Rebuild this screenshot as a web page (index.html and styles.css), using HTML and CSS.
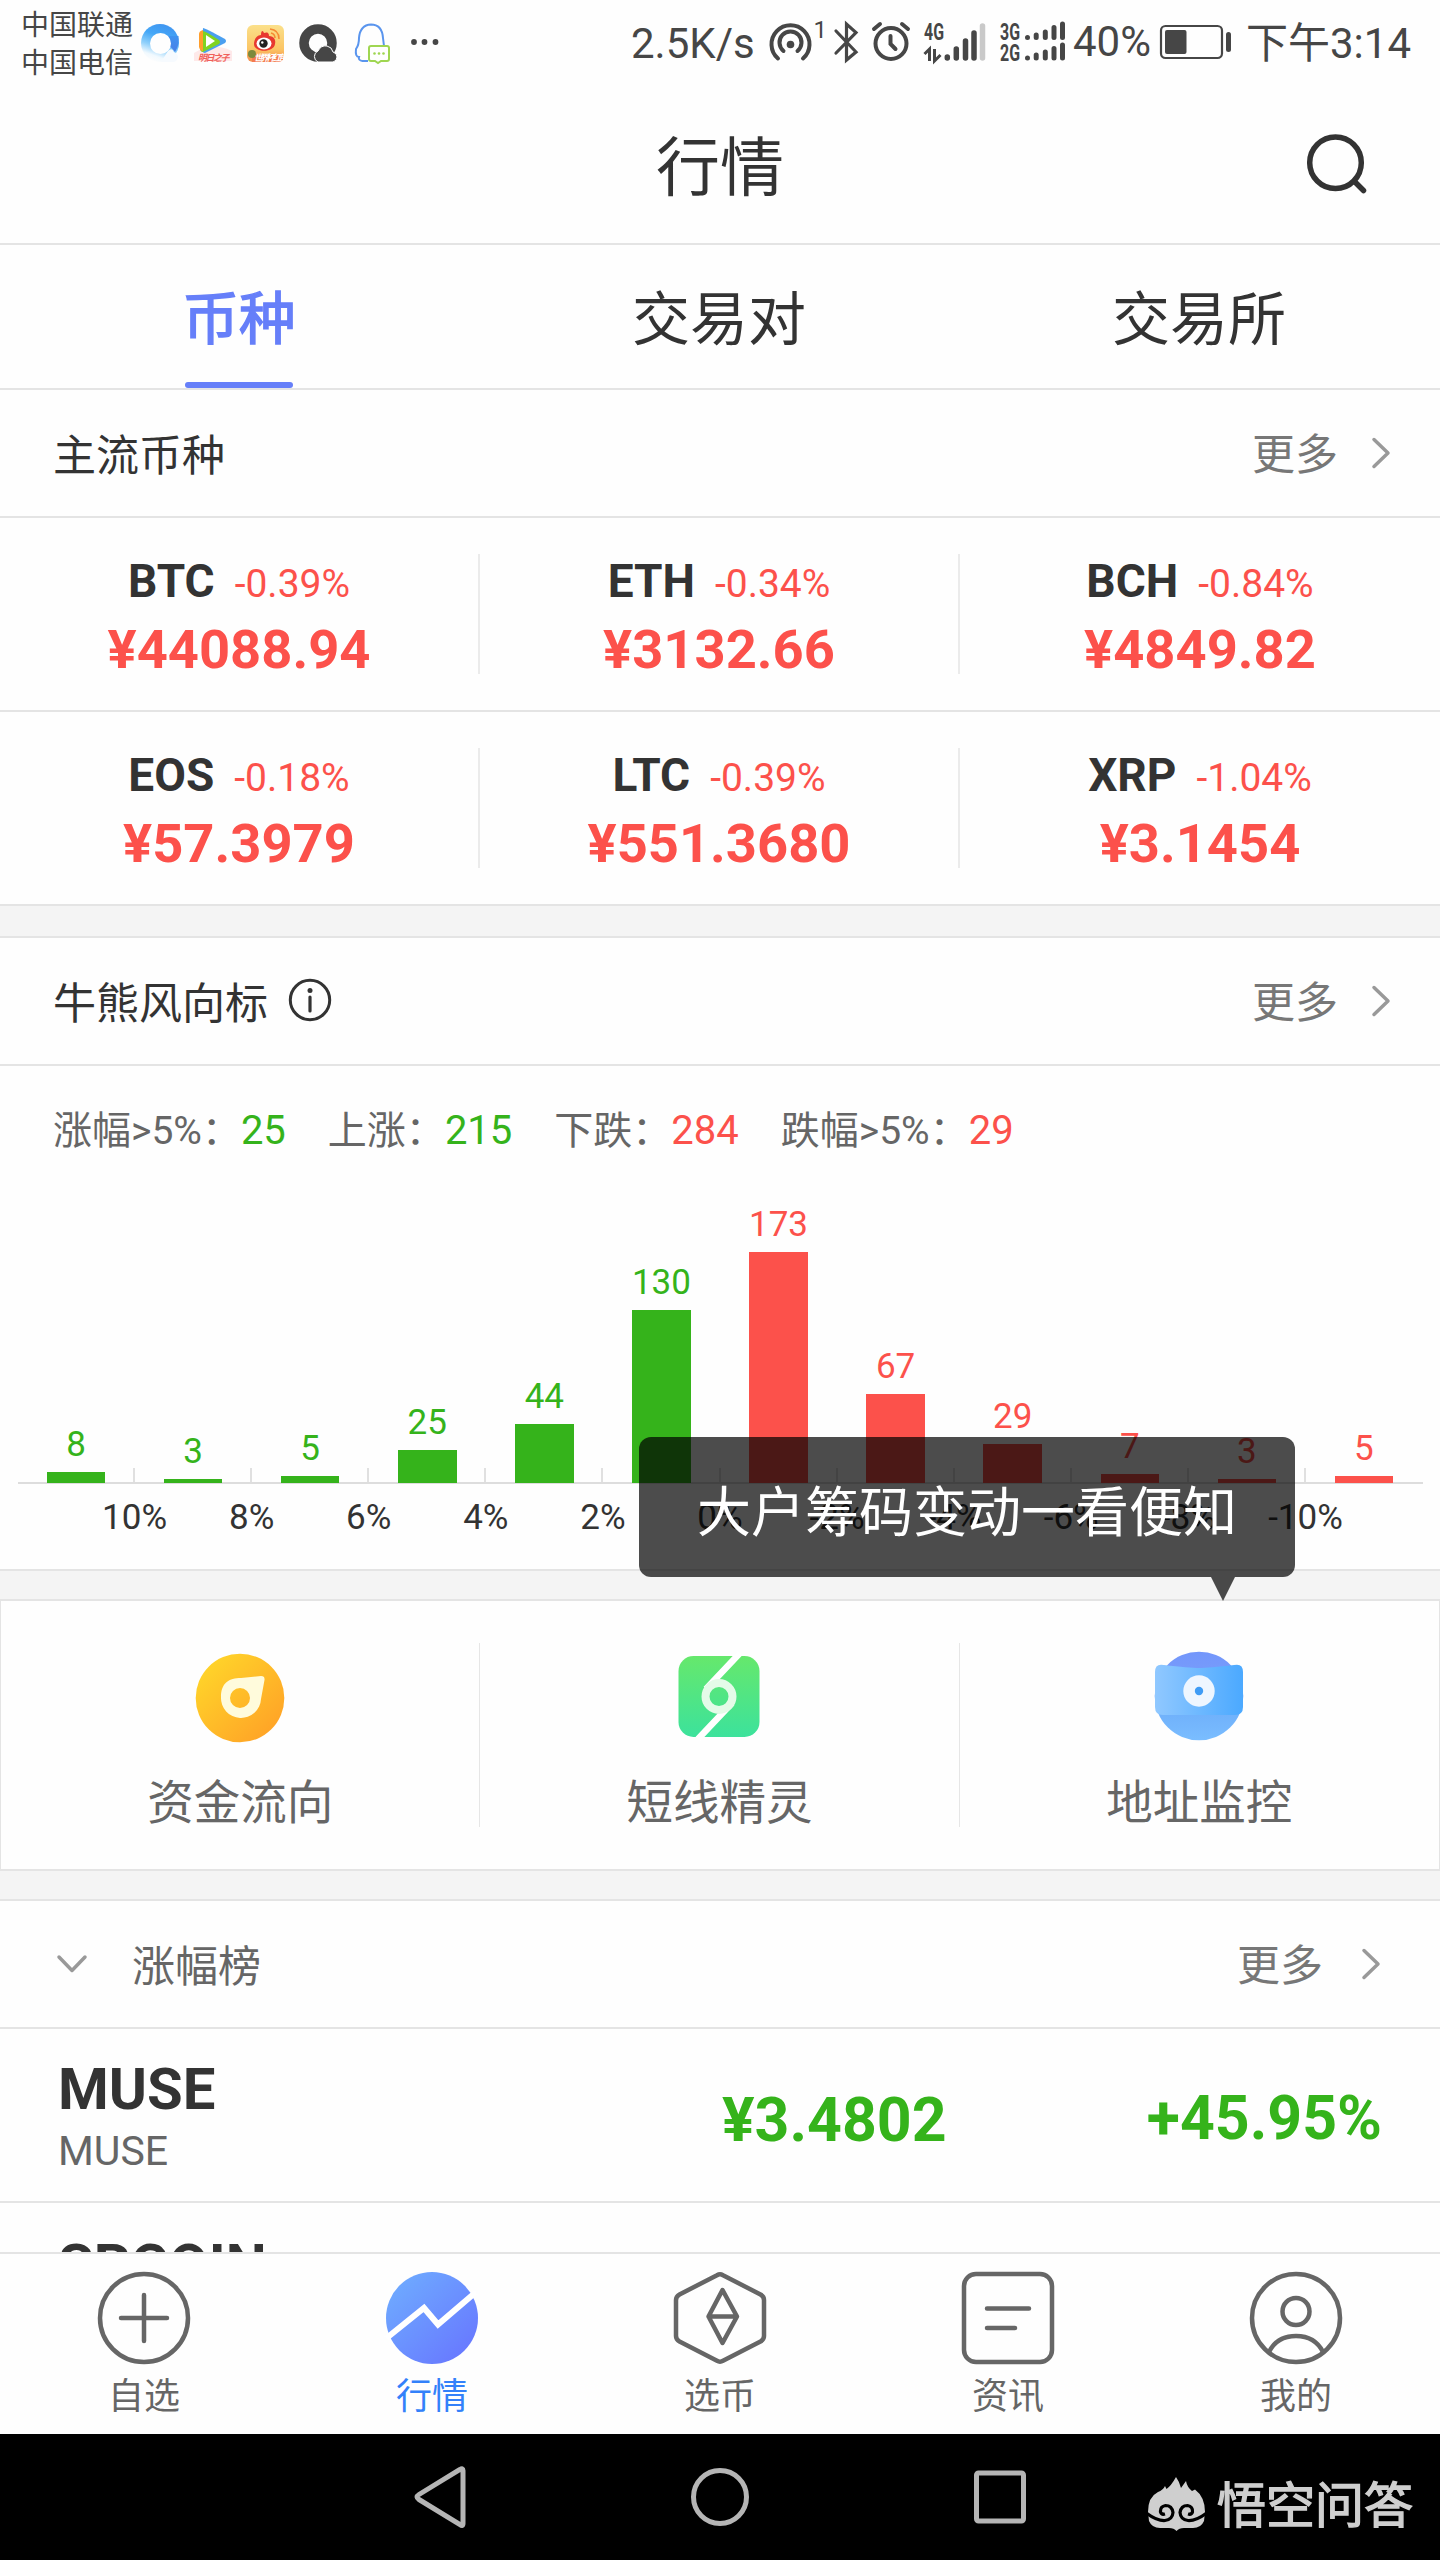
FILE: index.html
```html
<!DOCTYPE html>
<html lang="zh-CN">
<head>
<meta charset="utf-8">
<title>行情</title>
<link rel="stylesheet" href="styles.css">
</head>
<body>
<div class="phone">
  <div class="status">
    <div class="carriers"><span>中国联通</span><span>中国电信</span></div>
    <svg class="notif" width="316" height="50" viewBox="134 18 316 50">
      <defs>
        <linearGradient id="qb" x1=".7" y1="0" x2=".35" y2="1"><stop offset="0" stop-color="#3f93f0"/><stop offset=".35" stop-color="#45a8f7"/><stop offset=".62" stop-color="#8fd0fb"/><stop offset=".85" stop-color="#f1f9fe"/><stop offset="1" stop-color="#fdfdfd"/></linearGradient>
        <linearGradient id="qt" x1="0" y1="0" x2="0" y2="1"><stop offset="0" stop-color="#3f93f0"/><stop offset="1" stop-color="#4b7fe6"/></linearGradient>
        <linearGradient id="wb" x1="0" y1="0" x2="0" y2="1"><stop offset="0" stop-color="#fbe08a"/><stop offset=".65" stop-color="#fbc565"/><stop offset="1" stop-color="#f58a4b"/></linearGradient>
      </defs>
      <circle cx="160" cy="43" r="19" fill="url(#qb)"/>
      <path d="M168 36h10.500q1 9-3.500 16q-4-6-7-5z" fill="url(#qt)"/>
      <circle cx="160.500" cy="43.500" r="10.500" fill="#fefefe"/>
      <path d="M168 51q4-4 6 1q4 2 4 5q-1 5-5 5h-12z" fill="#f6fafe"/>
      <path d="M194 53q18-12 38-2v10h-38z" fill="#fee9e9"/>
      <path d="M203 28q2 0 22 11q2 2 0 4L205 53q-3 0-3-4z" fill="#4a9ff0"/>
      <path d="M202 31q2-1 17 9q2 2 0 4L203 52q-3 0-3-4z" fill="#7fd321"/>
      <path d="M203 30q-4 1-4 4v13q1 4 4 4z" fill="#ff9e2c"/>
      <path d="M206 35l9 6l-9 6z" fill="#fff"/>
      <text x="198" y="61" class="micro red-ink">明日之子</text>
      <rect x="247" y="25" width="37" height="37" rx="6" fill="url(#wb)"/>
      <path d="M254 44c0-6 4-9 7-9c0-5 2-5 3-2c5-2 5 2 5 3c5 0 7 4 6 8c-1 9-21 9-21 0z" fill="#e8382f"/>
      <ellipse cx="264" cy="43.500" rx="7.500" ry="6" fill="#fff"/><circle cx="263.500" cy="43.500" r="4.200" fill="#222"/>
      <circle cx="262.300" cy="42.500" r="1.200" fill="#fff"/>
      <path d="M270 29q9 1 9 10M271 33q4 1 4 5" stroke="#f58a33" stroke-width="1.500" fill="none"/>
      <path d="M252 55h31v4q-1 3-4 3h-27z" fill="#f47b50"/>
      <circle cx="252" cy="54" r="4" fill="#7c8a3d"/>
      <text x="254" y="61" class="micro white-ink">世界杯红包</text>
      <circle cx="318" cy="43" r="14" fill="none" stroke="#464646" stroke-width="9.500"/>
      <path d="M318 62a6 6 0 0 1 0-11q3-6 9-5q5 1 6 6q4 1 4 5t-4 5z" fill="#464646" stroke="#fff" stroke-width="1"/>
      <path d="M362 61q-4-1-3-4q-4 0-3-8q3-4 3-11q1-13 12-13.500q11 0 12 13.500l1 8M362 61h6" fill="none" stroke="#5a95ee" stroke-width="2"/>
      <path d="M371 46h16q2 0 2 2v11q0 2-2 2h-6l-3 2l-3-2h-4q-2 0-2-2V48q0-2 2-2z" fill="#fff" stroke="#9fd651" stroke-width="2"/>
      <g fill="#9fd651"><circle cx="374.500" cy="53.500" r="1.300"/><circle cx="379" cy="53.500" r="1.300"/><circle cx="383.500" cy="53.500" r="1.300"/></g>
      <g fill="#464646"><circle cx="414" cy="42" r="2.900"/><circle cx="424.500" cy="42" r="2.900"/><circle cx="435.500" cy="42" r="2.900"/></g>
    </svg>
    <span class="speed">2.5K/s</span>
    <svg class="sys" width="308" height="56" viewBox="764 12 308 56">
      <g fill="none" stroke="#464646" stroke-width="4" stroke-linecap="round">
        <path d="M779 58.500A19 19 0 1 1 804 58.500"/>
        <path d="M784.500 51A11 11 0 1 1 798.500 51"/>
        <path d="M837 31L857 52L847.500 60V24L857 32.500L837 53" stroke-width="3.200"/>
        <circle cx="892" cy="43.500" r="15.500"/>
        <path d="M891.500 36v8l5 5M875 29l6-5M909 29l-6-5"/>
      </g>
      <circle cx="791.500" cy="44.500" r="3.800" fill="#464646"/>
      <text x="814.500" y="38" class="sup">1</text>
      <text x="925" y="40" class="net" textLength="20" lengthAdjust="spacingAndGlyphs">4G</text>
      <text x="1001" y="40" class="net" textLength="20" lengthAdjust="spacingAndGlyphs">3G</text>
      <text x="1001" y="61" class="net" textLength="20" lengthAdjust="spacingAndGlyphs">2G</text>
      <path d="M925.500 54l5-5v12M935.500 49v12l6-6" stroke="#464646" stroke-width="3" fill="none"/>
      <g stroke="#464646" stroke-width="5.500" stroke-linecap="round">
        <path d="M948.300 57v1M957.300 49v9M966.500 41v17M975 33v25"/>
        <path d="M983.500 26v32" stroke="#c9c9c9"/>
      </g>
      <g stroke="#464646" stroke-width="5" stroke-linecap="round">
        <path d="M1028.500 37.500v.1M1037.200 35v2.500M1046.300 32v5.500M1055 27.500v10M1063.500 24v13.500"/>
        <path d="M1028.500 58v.1M1037.200 55v3M1046.300 52v6M1055 48.500v9.500M1063.500 45v13"/>
      </g>
    </svg>
    <span class="battery-pct">40%</span>
    <svg class="battery" width="74" height="36" viewBox="1162 24 74 36">
      <rect x="1164" y="26" width="61" height="32" rx="4.500" fill="none" stroke="#464646" stroke-width="2.200"/>
      <rect x="1168" y="30" width="21.500" height="24" rx="2" fill="#464646"/>
      <rect x="1229" y="32" width="5" height="20" rx="2.500" fill="#464646"/>
    </svg>
    <span class="clock">下午3:14</span>
  </div>

  <header class="title-bar">
    <h1>行情</h1>
    <svg class="search" width="68" height="68" viewBox="1302 128 68 68"><g fill="none" stroke="#333" stroke-width="5.500" stroke-linecap="round"><circle cx="1335.500" cy="161.700" r="25.800"/><path d="M1354.500 180.500L1363.500 189.500"/></g></svg>
  </header>

  <nav class="tabs">
    <a class="tab active">币种</a>
    <a class="tab">交易对</a>
    <a class="tab">交易所</a>
  </nav>

  <div class="section-head">
    <h2>主流币种</h2>
    <span class="more">更多<svg width="22" height="36" viewBox="0 0 22 36"><path d="M4 4.500L18 18L4 31.500"/></svg></span>
  </div>
  <div class="coins">
    <div class="coin"><p><b>BTC</b><span>-0.39%</span></p><strong>¥44088.94</strong></div>
    <div class="coin"><p><b>ETH</b><span>-0.34%</span></p><strong>¥3132.66</strong></div>
    <div class="coin"><p><b>BCH</b><span>-0.84%</span></p><strong>¥4849.82</strong></div>
  </div>
  <div class="coins">
    <div class="coin"><p><b>EOS</b><span>-0.18%</span></p><strong>¥57.3979</strong></div>
    <div class="coin"><p><b>LTC</b><span>-0.39%</span></p><strong>¥551.3680</strong></div>
    <div class="coin"><p><b>XRP</b><span>-1.04%</span></p><strong>¥3.1454</strong></div>
  </div>
  <div class="gap gap-coins"></div>

  <div class="section-head">
    <h2>牛熊风向标</h2>
    <svg class="info" width="46" height="46" viewBox="0 0 46 46"><circle cx="23" cy="23" r="19.700" fill="none" stroke="#333" stroke-width="3"/><circle cx="23" cy="13.500" r="2.500" fill="#333"/><path d="M23 20v14" stroke="#333" stroke-width="3.200" stroke-linecap="round"/></svg>
    <span class="more">更多<svg width="22" height="36" viewBox="0 0 22 36"><path d="M4 4.500L18 18L4 31.500"/></svg></span>
  </div>
  <div class="stats">
    <span>涨幅&gt;5%：<em class="up">25</em></span>
    <span>上涨：<em class="up">215</em></span>
    <span>下跌：<em class="down">284</em></span>
    <span>跌幅&gt;5%：<em class="down">29</em></span>
  </div>
  <div class="chart">
    <div class="bars">
      <div class="col up"><span>8</span><i style="height:11px"></i></div>
      <div class="col up"><span>3</span><i style="height:4px"></i></div>
      <div class="col up"><span>5</span><i style="height:7px"></i></div>
      <div class="col up"><span>25</span><i style="height:33px"></i></div>
      <div class="col up"><span>44</span><i style="height:59px"></i></div>
      <div class="col up"><span>130</span><i style="height:173px"></i></div>
      <div class="col down"><span>173</span><i style="height:231px"></i></div>
      <div class="col down"><span>67</span><i style="height:89px"></i></div>
      <div class="col down"><span>29</span><i style="height:39px"></i></div>
      <div class="col down"><span>7</span><i style="height:9px"></i></div>
      <div class="col down"><span>3</span><i style="height:4px"></i></div>
      <div class="col down"><span>5</span><i style="height:7px"></i></div>
    </div>
    <div class="scale"><span>10%</span><span>8%</span><span>6%</span><span>4%</span><span>2%</span><span>0%</span><span>-2%</span><span>-4%</span><span>-6%</span><span>-8%</span><span>-10%</span></div>
    <div class="tooltip">大户筹码变动一看便知</div>
  </div>
  <div class="gap gap-chart"></div>

  <div class="actions">
    <div class="action">
      <svg width="100" height="100" viewBox="0 0 100 100">
        <defs><linearGradient id="gold" x1="0" y1="0" x2="1" y2="1"><stop offset=".1" stop-color="#ffd52a"/><stop offset="1" stop-color="#ff9c26"/></linearGradient></defs>
        <circle cx="50" cy="50" r="44.300" fill="url(#gold)"/>
        <path fill-rule="evenodd" d="M31 49C31 35 39 30 51 30L71 28Q75 28 74.500 32L71 51A20 20 0 0 1 31 49zM50 40A10 10 0 1 0 50 60A10 10 0 1 0 50 40z" fill="#fffbdc"/>
      </svg>
      <span>资金流向</span>
    </div>
    <div class="action">
      <svg width="100" height="100" viewBox="0 0 100 100">
        <defs><linearGradient id="green" x1="0" y1="0" x2="0" y2="1"><stop offset="0" stop-color="#66e86c"/><stop offset="1" stop-color="#3ce29c"/></linearGradient></defs>
        <rect x="9.500" y="8" width="81" height="81" rx="15" fill="url(#green)"/>
        <path d="M71 5L37 41M63 55L29 91" stroke="#fff" stroke-width="6.500" fill="none"/>
        <circle cx="50" cy="48.500" r="13.500" fill="none" stroke="#e4fbe8" stroke-width="8"/>
      </svg>
      <span>短线精灵</span>
    </div>
    <div class="action">
      <svg width="100" height="100" viewBox="0 0 100 100">
        <defs>
          <linearGradient id="blue" x1="0" y1="0" x2="1" y2="0"><stop offset="0" stop-color="#90c8ff"/><stop offset="1" stop-color="#4ba9ff"/></linearGradient>
          <linearGradient id="ball" x1="0" y1="0" x2="0" y2="1"><stop offset="0" stop-color="#7396fb"/><stop offset=".3" stop-color="#789dfb"/><stop offset=".7" stop-color="#70b1fb"/><stop offset="1" stop-color="#7abdff"/></linearGradient>
        </defs>
        <circle cx="50" cy="48" r="44.300" fill="url(#ball)"/>
        <path d="M15 17Q40 20 50 20T85 17Q94 15 94 24V59Q94 67 86 67H14Q6 67 6 59V24Q6 15 15 17z" fill="url(#blue)"/>
        <circle cx="50" cy="43" r="15.700" fill="#eef6ff"/><circle cx="50" cy="43" r="4.200" fill="#3f9cf5"/>
      </svg>
      <span>地址监控</span>
    </div>
  </div>
  <div class="gap gap-actions"></div>

  <div class="section-head rank-head">
    <svg class="fold" width="36" height="24" viewBox="0 0 36 24"><path d="M5 5L18 18.500L31 5"/></svg>
    <h2>涨幅榜</h2>
    <span class="more">更多<svg width="22" height="36" viewBox="0 0 22 36"><path d="M4 4.500L18 18L4 31.500"/></svg></span>
  </div>
  <div class="rank">
    <div class="name"><b>MUSE</b><span>MUSE</span></div>
    <strong class="price">¥3.4802</strong>
    <strong class="pct">+45.95%</strong>
  </div>
  <div class="rank clipped"><div class="name"><b>SRCOIN</b></div></div>

  <nav class="tabbar">
    <a><svg width="96" height="96" viewBox="0 0 96 96"><circle cx="48" cy="48" r="44"/><path d="M48 25v46M25 48h46"/></svg><span>自选</span></a>
    <a class="on"><svg width="96" height="96" viewBox="0 0 96 96"><defs><linearGradient id="act" x1="0" y1="0" x2="1" y2="1"><stop offset="0" stop-color="#6fb0ff"/><stop offset="1" stop-color="#6772ff"/></linearGradient></defs><circle cx="48" cy="48" r="46" class="disc" fill="url(#act)"/><path class="trend" d="M2 68.500L40 38L54 54.500L92 22"/></svg><span>行情</span></a>
    <a><svg width="96" height="96" viewBox="0 0 96 96"><path d="M45 5.200Q48 3.500 51 5.200L88.500 24.500Q92 26.500 92 30V66Q92 69.500 88.500 71.500L51 90.800Q48 92.500 45 90.800L7.500 71.500Q4 69.500 4 66V30Q4 26.500 7.500 24.500z"/><path d="M50.500 20L65 46.500L50.500 73L36.500 46.500zM36.500 46.500h28"/></svg><span>选币</span></a>
    <a><svg width="96" height="96" viewBox="0 0 96 96"><rect x="4" y="4" width="88" height="88" rx="12"/><path d="M27 38.500h42M27 58h28"/></svg><span>资讯</span></a>
    <a><svg width="96" height="96" viewBox="0 0 96 96"><circle cx="48" cy="48" r="44"/><circle cx="48" cy="41.500" r="13.500"/><path d="M21 82Q29 66 48 66T75 82"/></svg><span>我的</span></a>
  </nav>

  <div class="sysnav">
    <svg width="64" height="68" viewBox="0 0 64 68"><path d="M50 7.500V60.500Q50 64 47 61.500L6 36.500Q2 34 6 31.500L47 6.500Q50 4.500 50 7.500z"/></svg>
    <svg width="64" height="68" viewBox="0 0 64 68"><circle cx="32" cy="34" r="26.500"/></svg>
    <svg width="64" height="68" viewBox="0 0 64 68"><rect x="8.500" y="10" width="47" height="48" rx="2"/></svg>
    <div class="brand">
      <svg width="60" height="56" viewBox="-1 -1 60 56"><path d="M0 35Q0 20 10 15Q15 13 17 9L18.500 12Q23 9 28 0Q31 4 33 11L38 4Q39 10 44 14L47 12.500Q57 20 57 35L56 44Q53 51 45 51H36Q31 51 28.500 54Q26 51 21 51H12Q4 51 1 44z" fill="#cfcfcf"/><g fill="none" stroke="#000" stroke-width="3.200"><path d="M-1 36.500Q9 44 17 43.500Q24.500 42.500 25 35.500Q24 28.500 17.500 28.500Q12 29.500 12.500 35Q13.500 38 17 37"/><path d="M58 36.500Q48 44 40 43.500Q32.500 42.500 32 35.500Q33 28.500 39.500 28.500Q45 29.500 44.500 35Q43.500 38 40 37"/></g></svg>
      <span>悟空问答</span>
    </div>
  </div>
</div>
</body>
</html>
```

FILE: styles.css
```css
* { box-sizing: border-box; margin: 0; padding: 0; }
body { background: #fff; font-family: Roboto, "Noto Sans CJK SC", sans-serif; color: #333; }
h1, h2 { font-weight: 400; }
em, i { font-style: normal; }
svg { display: block; flex: none; }
.phone { width: 1440px; height: 2560px; overflow: hidden; display: flex; flex-direction: column; background: #fefefe; }
.phone > * { flex: none; }
.up { color: #35b31b; }
.down { color: #fc514b; }

.status { height: 90px; display: flex; padding-left: 21px; color: #464646; font-size: 42px; line-height: 50px; white-space: nowrap; }
.carriers { width: 113px; padding-top: 7px; display: flex; flex-direction: column; font-size: 28px; line-height: 38px; }
.notif { margin-top: 18px; }
.speed { width: 133px; margin-left: 181px; padding-top: 19px; }
.sys { margin-top: 12px; margin-left: -1px; }
.battery-pct { width: 88px; padding: 17px 0 0 2px; font-size: 42px; }
.battery { margin-top: 24px; }
.clock { padding: 19px 0 0 13px; }
.micro { font-size: 9px; font-weight: 700; font-style: italic; letter-spacing: -1.500px; }
.red-ink { fill: #f0605a; }
.white-ink { fill: #fff; letter-spacing: -3px; }
.sup { font-size: 24px; fill: #464646; }
.net { font-size: 23px; font-weight: 700; fill: #464646; }

.title-bar { height: 155px; border-bottom: 2px solid #e4e4e4; display: grid; grid-template-columns: 1fr auto 1fr; align-items: center; }
.title-bar h1 { grid-column: 2; font-size: 64px; line-height: 80px; padding-top: 4px; }
.search { justify-self: end; margin: 0 70px 8px 0; }

.tabs { height: 145px; border-bottom: 2px solid #e4e4e4; display: grid; grid-template-columns: repeat(3, 1fr); justify-items: center; font-size: 58px; }
.tab { height: 144px; line-height: 151px; padding-right: 2px; }
.tab.active { font-size: 56.500px; color: #667ff9; -webkit-text-stroke: 1.600px #667ff9; display: flex; flex-direction: column; }
.tab.active::after { content: ""; width: 108px; height: 6px; border-radius: 3px; background: #667ff9; margin: -14px auto 0; }

.section-head { height: 128px; border-bottom: 2px solid #e4e4e4; display: flex; align-items: center; padding: 0 47px 0 53px; font-size: 43px; line-height: 60px; }
.section-head h2 { font-size: 43px; padding-top: 5px; }
.more { margin-left: auto; display: flex; align-items: center; color: #777; padding-top: 4px; }
.more svg { margin: -4px 1px 0 32px; fill: none; stroke: #999; stroke-width: 3.500; stroke-linecap: round; stroke-linejoin: round; }
.info { margin: -2px 0 0 19px; }

.coins { height: 194px; border-bottom: 2px solid #e4e4e4; display: grid; grid-template-columns: repeat(3, 1fr); align-items: center; }
.coin { height: 120px; border-right: 2px solid #ebebeb; display: flex; flex-direction: column; align-items: center; color: #fc514b; }
.coin:last-child { border-right: 0; }
.coin p { display: flex; align-items: baseline; gap: 20px; line-height: 54px; }
.coin b { font-size: 46px; color: #333; }
.coin span { font-size: 39px; }
.coin strong { font-size: 54.300px; line-height: 64px; margin-top: 7px; }

.gap { background: #f4f4f4; border-bottom: 2px solid #e4e4e4; }
.gap-coins { height: 32px; }
.gap-chart { height: 30px; }
.gap-actions { height: 30px; }

.stats { height: 126px; display: flex; gap: 42px; padding-left: 53px; color: #666; font-size: 39px; line-height: 129px; }
.stats em { font-size: 40px; }

.chart { position: relative; height: 379px; padding: 0 17.500px; border-bottom: 2px solid #e4e4e4; }
.bars { height: 292px; border-bottom: 2px solid #ddd; display: grid; grid-template-columns: repeat(12, 1fr); background: repeating-linear-gradient(90deg, transparent 0 115.100px, #e0e0e0 115.100px 117.100px) left bottom / 1290px 14px no-repeat; }
.col { display: flex; flex-direction: column; align-items: center; justify-content: flex-end; font-size: 35px; line-height: 40px; }
.col i { width: 50%; background: currentColor; margin-bottom: -1px; }
.col span { margin-bottom: 7px; }
.scale { display: grid; grid-template-columns: repeat(11, 1fr); margin: 13px 58.500px 0; font-size: 35px; line-height: 42px; text-align: center; }
.tooltip { position: absolute; left: 639px; top: 245px; width: 656px; height: 140px; border-radius: 12px; background: rgba(0, 0, 0, .7); color: #fff; font-size: 54px; line-height: 153px; text-align: center; z-index: 1; }
.tooltip::after { content: ""; position: absolute; left: 572px; top: 140px; border: solid transparent; border-width: 24px 12px 0; border-top-color: rgba(0, 0, 0, .7); }

.actions { height: 270px; border: 1px solid #e4e4e4; border-top: 0; border-bottom-width: 2px; display: grid; grid-template-columns: repeat(3, 1fr); align-items: center; }
.action { height: 184px; border-right: 1px solid #e6e6e6; display: flex; flex-direction: column; align-items: center; gap: 22px; color: #666; font-size: 46.500px; line-height: 66px; padding-top: 5px; }
.action:last-child { border-right: 0; }

.rank-head { padding-right: 57px; color: #666; }
.rank-head .more svg { margin-left: 37px; }
.fold { margin: 0 42px 0 1px; fill: none; stroke: #999; stroke-width: 3.500; stroke-linecap: round; stroke-linejoin: round; }
.rank { height: 174px; border-bottom: 2px solid #e4e4e4; display: grid; grid-template-columns: 664px auto 1fr; align-items: center; padding: 3px 58px 0 58px; color: #35b31b; }
.name { display: flex; flex-direction: column; color: #333; }
.name b { font-size: 58px; line-height: 68px; }
.name span { font-size: 41px; line-height: 56px; color: #666; }
.rank strong { font-size: 60.800px; line-height: 70px; white-space: nowrap; }
.price { padding-top: 8px; }
.pct { text-align: right; padding-top: 4px; }
.clipped { height: 49px; padding-top: 28px; align-items: start; overflow: hidden; border-bottom: 0; }

.tabbar { height: 182px; border-top: 2px solid #e4e4e4; display: grid; grid-template-columns: repeat(5, 1fr); background: #fefefe; color: #666; }
.tabbar a { display: flex; flex-direction: column; align-items: center; padding-top: 16px; font-size: 36px; line-height: 52px; gap: 5px; }
.tabbar svg { fill: none; stroke: #666; stroke-width: 4.500; stroke-linecap: round; stroke-linejoin: round; }
.tabbar .on { color: #3381fa; }
.tabbar .disc { stroke: none; fill: url(#act); }
.tabbar .trend { stroke: #fff; stroke-width: 6; stroke-linejoin: miter; stroke-linecap: butt; }

.sysnav { flex: 1; background: #000; display: flex; align-items: center; padding-left: 413px; }
.sysnav > svg { margin-right: 216px; fill: none; stroke: #b5b5b5; stroke-width: 5; }
.sysnav > svg:first-child { margin-right: 211px; }
.sysnav > svg:nth-child(3) { margin-right: 115px; }
.brand { display: flex; align-items: center; gap: 10px; padding-top: 14px; color: #cfcfcf; font-size: 49px; -webkit-text-stroke: 1.400px #cfcfcf; line-height: 60px; white-space: nowrap; }
.brand span { padding-top: 6px; }
```
